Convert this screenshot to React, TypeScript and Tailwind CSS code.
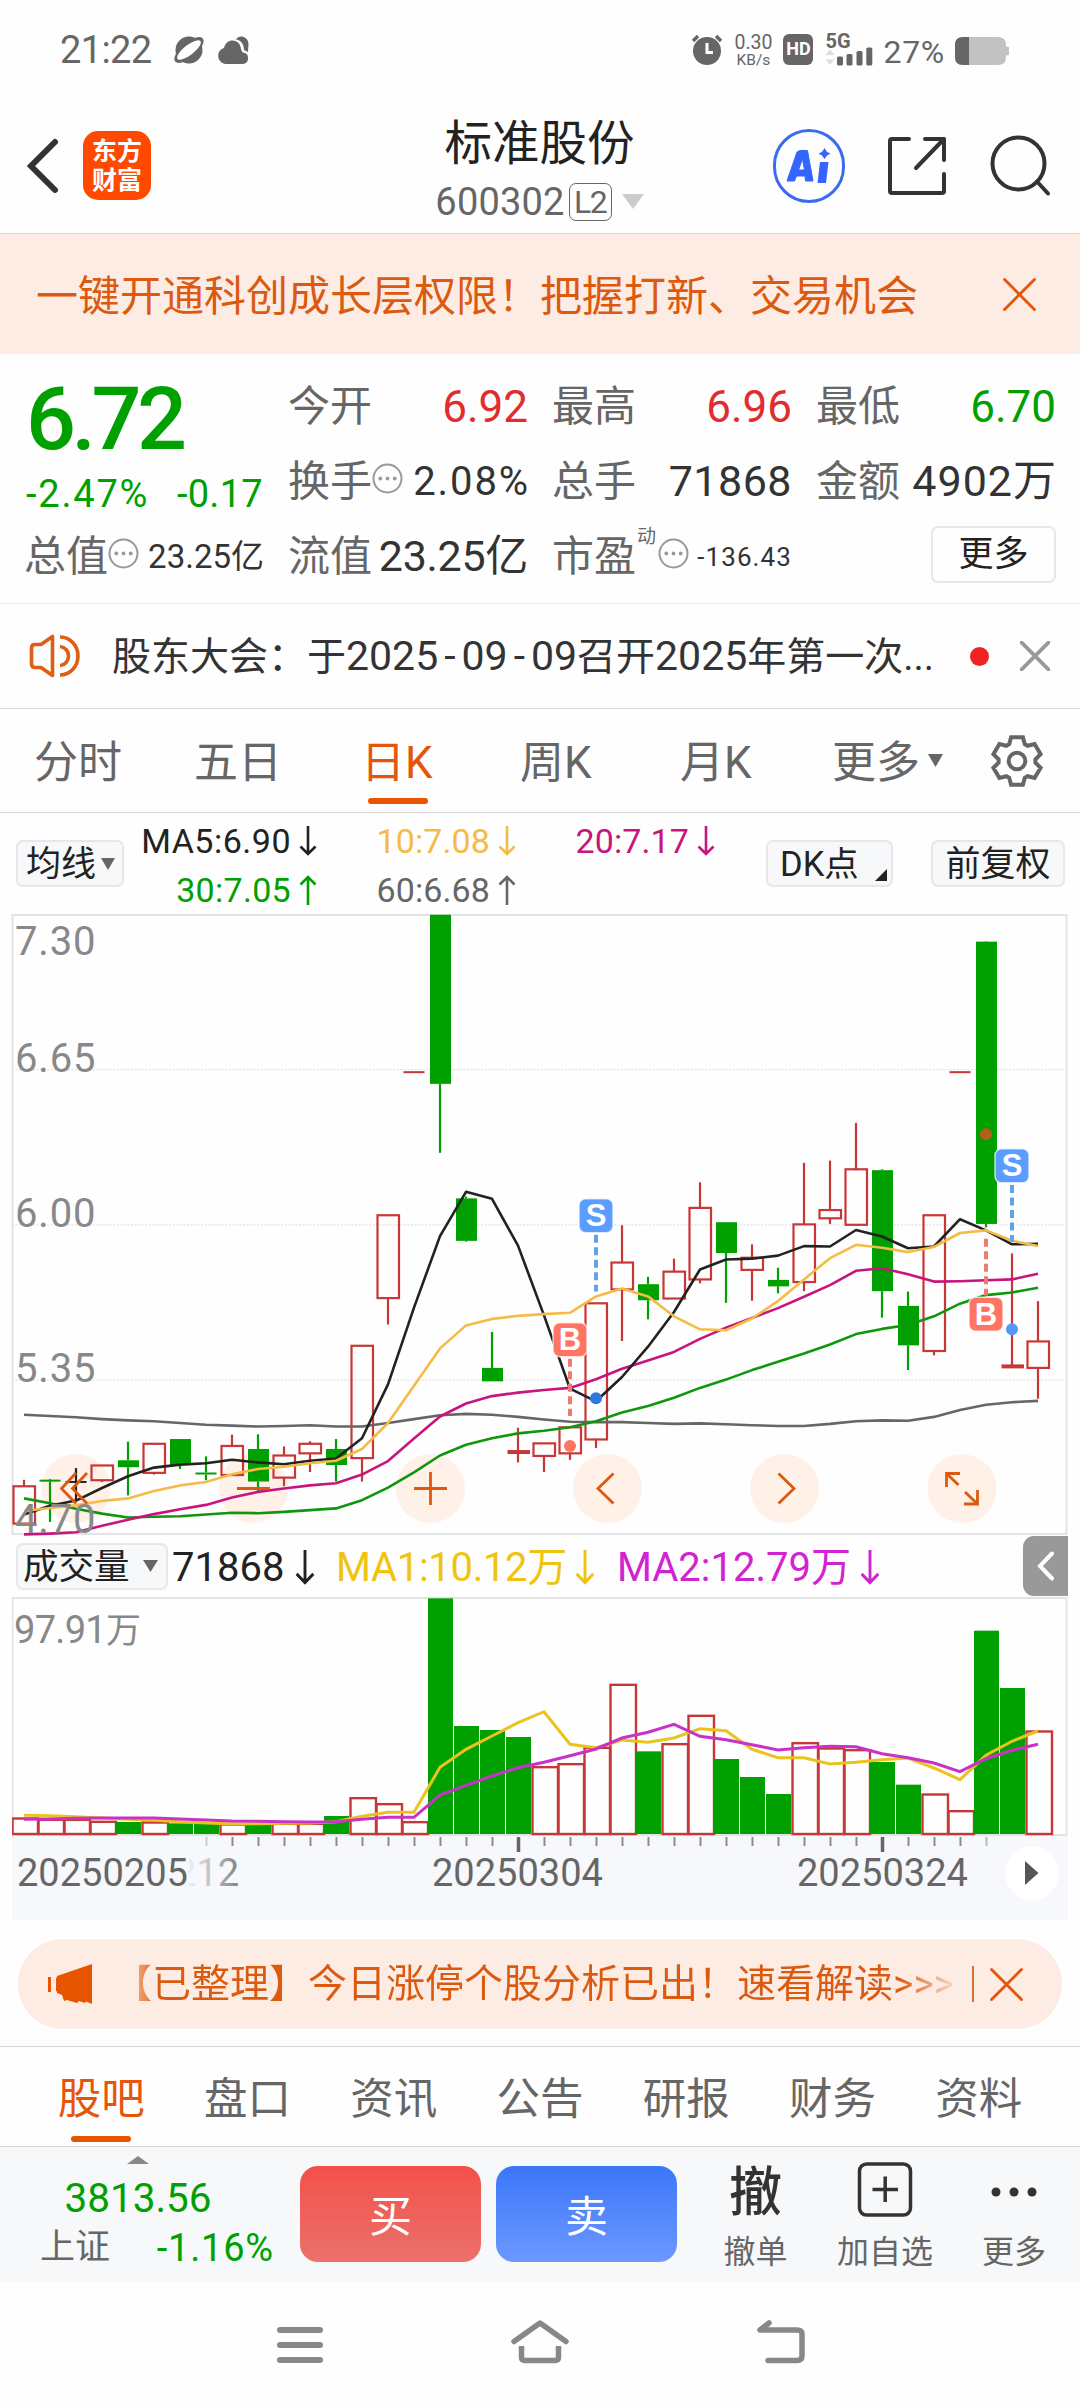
import React from "react";

const GREEN = "#00a000";
const RED = "#c83737";

/* ---------- chart data ---------- */

// One unit of the price scale in pixels.
const UNIT = 1 / 2.306;
const STEP = 26;
const cx = (i: number) => 12 + STEP * i;
const py = (v: number) => v * UNIT - 14;

type Candle = [kind: "u" | "d" | "n", high: number, top: number, bottom: number, low: number];

const candles: Candle[] = [
  ["u", 1337, 1352, 1438, 1438],
  ["d", 1335, 1337, 1341, 1434],
  ["n", 1310, 1341, 1343, 1385],
  ["u", 1304, 1304, 1338, 1342],
  ["d", 1249, 1292, 1308, 1373],
  ["u", 1254, 1254, 1321, 1325],
  ["d", 1243, 1243, 1303, 1312],
  ["d", 1283, 1320, 1325, 1338],
  ["u", 1233, 1259, 1326, 1326],
  ["d", 1232, 1266, 1341, 1365],
  ["u", 1260, 1281, 1332, 1352],
  ["u", 1248, 1254, 1276, 1319],
  ["d", 1243, 1266, 1303, 1341],
  ["u", 1028, 1028, 1287, 1341],
  ["u", 727, 727, 918, 979],
  ["u", 397, 397, 397, 397],
  ["d", 34, 34, 424, 583],
  ["d", 684, 688, 786, 788],
  ["d", 996, 1079, 1110, 1110],
  ["u", 1217, 1271, 1275, 1297],
  ["u", 1253, 1253, 1282, 1319],
  ["u", 1216, 1216, 1276, 1291],
  ["u", 930, 930, 1244, 1264],
  ["u", 750, 836, 898, 1017],
  ["d", 869, 886, 923, 967],
  ["u", 827, 857, 919, 919],
  ["u", 651, 710, 875, 884],
  ["d", 743, 743, 814, 929],
  ["u", 794, 825, 853, 924],
  ["d", 848, 876, 891, 907],
  ["u", 606, 748, 881, 902],
  ["u", 601, 715, 734, 747],
  ["u", 514, 621, 749, 749],
  ["d", 621, 623, 902, 963],
  ["d", 903, 936, 1027, 1084],
  ["u", 727, 727, 1040, 1050],
  ["u", 397, 397, 397, 397],
  ["d", 95, 96, 747, 755],
  ["u", 815, 1073, 1078, 1078],
  ["u", 925, 1018, 1079, 1150],
];

const ma5 = [1417, 1397, 1385, 1356, 1329, 1309, 1302, 1299, 1291, 1297, 1301, 1293, 1288, 1241, 1117, 940, 775, 673, 689, 797, 958, 1127, 1156, 1100, 1030, 950, 852, 829, 827, 820, 798, 799, 761, 776, 803, 799, 736, 762, 794, 793];
const ma10 = [1409, 1402, 1396, 1386, 1380, 1363, 1350, 1342, 1324, 1312, 1307, 1299, 1293, 1266, 1206, 1120, 1034, 981, 966, 959, 955, 952, 914, 896, 914, 960, 990, 992, 965, 925, 875, 826, 795, 802, 812, 800, 768, 762, 786, 798];
const ma20 = [1463, 1461, 1458, 1443, 1429, 1416, 1405, 1395, 1378, 1365, 1357, 1350, 1345, 1325, 1294, 1242, 1191, 1161, 1144, 1136, 1130, 1125, 1105, 1081, 1062, 1042, 1012, 986, 964, 941, 915, 888, 855, 849, 863, 880, 879, 877, 875, 862];
const ma30 = [1380, 1391, 1404, 1415, 1424, 1422, 1421, 1417, 1413, 1414, 1411, 1407, 1403, 1384, 1355, 1320, 1281, 1256, 1241, 1230, 1224, 1216, 1202, 1182, 1167, 1148, 1125, 1106, 1084, 1065, 1046, 1025, 1001, 989, 980, 960, 931, 911, 905, 894];
const ma60 = [1187, 1190, 1193, 1197, 1200, 1202, 1206, 1210, 1212, 1214, 1213, 1211, 1214, 1214, 1206, 1197, 1188, 1185, 1187, 1192, 1198, 1203, 1204, 1204, 1206, 1208, 1207, 1209, 1211, 1213, 1213, 1208, 1202, 1200, 1201, 1192, 1176, 1164, 1158, 1155];

// Volume values count thirds of a pixel down from the header row.
const vy = (v: number) => v / 3 - 57;
const volumes: ["u" | "d", number][] = [
  ["u", 834], ["u", 838], ["u", 838], ["u", 844], ["d", 846], ["u", 846], ["d", 850], ["d", 852], ["u", 852], ["d", 852],
  ["u", 850], ["u", 850], ["d", 828], ["u", 773], ["u", 791], ["u", 845], ["d", 175], ["d", 558], ["d", 570], ["d", 591],
  ["u", 680], ["u", 671], ["u", 622], ["u", 433], ["d", 634], ["u", 611], ["u", 526], ["d", 657], ["d", 711], ["d", 762],
  ["u", 608], ["u", 624], ["u", 629], ["d", 666], ["d", 734], ["u", 762], ["u", 812], ["d", 272], ["d", 444], ["u", 573],
];
const volMa1 = [826, 827, 830, 834, 838, 841, 845, 849, 851, 851, 850, 849, 845, 829, 817, 817, 682, 628, 588, 548, 515, 613, 623, 600, 607, 594, 566, 572, 628, 653, 653, 672, 667, 659, 654, 684, 719, 646, 604, 573];
const volMa2 = [838, 837, 835, 834, 834, 834, 837, 840, 843, 844, 845, 846, 845, 838, 832, 832, 765, 736, 708, 683, 667, 647, 627, 594, 577, 553, 589, 599, 614, 630, 623, 619, 620, 641, 653, 669, 695, 656, 631, 613];

const points = (vals: number[], y: (v: number) => number) => vals.map((v, i) => `${cx(i)},${y(v).toFixed(1)}`).join(" ");

/* ---------- icons ---------- */

function Cross({ size, color, width = 3 }: { size: number; color: string; width?: number }) {
  return (
    <svg width={size} height={size} viewBox="0 0 32 32" fill="none" stroke={color} strokeWidth={width} strokeLinecap="round">
      <path d="M1.5 1.5 30.5 30.5M30.5 1.5 1.5 30.5" />
    </svg>
  );
}

function Dots() {
  return (
    <svg width="31" height="31" viewBox="0 0 31 31" className="mb-1.5 shrink-0">
      <circle cx="15.5" cy="15.5" r="14" fill="none" stroke="#999" strokeWidth="2" />
      <circle cx="8.3" cy="15.5" r="1.9" fill="#999" />
      <circle cx="15.5" cy="15.5" r="1.9" fill="#999" />
      <circle cx="22.7" cy="15.5" r="1.9" fill="#999" />
    </svg>
  );
}

function Arrow({ up = false, h = 30, w = 18, color }: { up?: boolean; h?: number; w?: number; color: string }) {
  return (
    <svg width={w} height={h} viewBox="0 0 18 30" preserveAspectRatio="none" fill="none" stroke={color} strokeWidth="2.6" className={up ? "rotate-180" : ""}>
      <path d="M9 0V28M1.5 20.5 9 28 16.5 20.5" />
    </svg>
  );
}

function Caret({ w, h, color }: { w: number; h: number; color: string }) {
  return (
    <svg width={w} height={h} viewBox="0 0 10 10" preserveAspectRatio="none" className="shrink-0">
      <path d="M0 0H10L5 10Z" fill={color} />
    </svg>
  );
}

function Gear() {
  const pts: string[] = [];
  for (let k = 0; k < 6; k++) {
    for (const [r, d] of [[18.5, -25], [24.5, -14], [24.5, 14], [18.5, 25]]) {
      const a = ((-90 + 60 * k + d) * Math.PI) / 180;
      pts.push(`${(27 + r * Math.cos(a)).toFixed(1)},${(27 + r * Math.sin(a)).toFixed(1)}`);
    }
  }
  return (
    <svg width="54" height="54" viewBox="0 0 54 54" fill="none" stroke="#666" strokeWidth="4">
      <polygon points={pts.join(" ")} />
      <circle cx="27" cy="27" r="8.3" />
    </svg>
  );
}

/* ---------- sections ---------- */

function StatusBar() {
  return (
    <div className="flex h-[98px] items-center pl-[60px] pr-[71px] text-[#666]">
      <span className="pt-px text-[38px] leading-none tracking-[-0.6px]">21:22</span>
      <svg width="32" height="30" viewBox="0 0 32 30" className="mt-[2px] ml-[21px]">
        <circle cx="16" cy="15" r="13.5" fill="#666" />
        <ellipse cx="16" cy="15" rx="18" ry="7.5" transform="rotate(-40 16 15)" fill="#666" />
        <ellipse cx="16" cy="15" rx="14.5" ry="5" transform="rotate(-38 16 15)" fill="#fff" />
      </svg>
      <svg width="32" height="30" viewBox="0 0 32 30" className="mt-[2px] ml-[13px]" fill="#666">
        <path d="M19 3.5C21 0 30 1 30.500 9L30 17 26 15C26 8 22 5 17 4Z" />
        <path d="M8 29C-2 28-2 15 6 13 8 3 22 3 23 14 24 17 25 18 27 18 31 19 32 28 25 29Z" />
      </svg>
      <div className="flex-1" />
      <svg width="32" height="32" viewBox="0 0 32 32" fill="none">
        <circle cx="16" cy="18" r="14" fill="#666" />
        <path d="M2 8 7 3M30 8 25 3" stroke="#666" strokeWidth="3.5" />
        <path d="M16 10V19.500H22" stroke="#fff" strokeWidth="3" />
      </svg>
      <div className="ml-[10px] flex w-[40px] flex-col items-center pt-[3px] leading-none">
        <span className="text-[19.500px] leading-[18px]">0.30</span>
        <span className="text-[15.500px] leading-[16px]">KB/s</span>
      </div>
      <div className="ml-[10px] flex h-[31px] w-[30px] items-center justify-center rounded-[6px] bg-[#666] text-[18px] leading-none font-bold text-white">HD</div>
      <div className="ml-[12px] flex h-[32px] w-[48px] flex-col">
        <span className="text-[20px] leading-[16px] font-bold">5G</span>
        <svg width="48" height="17" viewBox="0 0 48 17" fill="#666" className="overflow-visible">
          <path d="M0.500 6 5 0.500 9.500 6ZM0.500 10.500 5 16 9.500 10.500Z" fill="#ddd" />
          <rect x="12" y="7.500" width="6" height="9" rx="1.500" />
          <rect x="21.500" y="5" width="6" height="11.500" rx="1.500" />
          <rect x="31.500" y="2" width="6" height="14.500" rx="1.500" />
          <rect x="41.300" y="-1.500" width="6" height="18" rx="1.500" />
        </svg>
      </div>
      <span className="mt-[6px] ml-[10px] text-[32px] leading-none tracking-[0.700px]">27%</span>
      <svg width="54" height="28" viewBox="0 0 54 28" className="mt-1 ml-[10px]">
        <path d="M8 0H43Q51 0 51 8V9.500L54 10V18L51 18.500V20Q51 28 43 28H8Q0 28 0 20V8Q0 0 8 0Z" fill="#c2c2c2" />
        <path d="M8 0H14V28H8Q0 28 0 20V8Q0 0 8 0Z" fill="#666" />
      </svg>
    </div>
  );
}

function Header() {
  return (
    <div className="flex h-[136px] items-center border-b border-[#d5d5d5] pl-[27px] pr-[29px]">
      <svg width="32" height="56" viewBox="0 0 32 56" fill="none" stroke="#333" strokeWidth="6" strokeLinecap="round" className="shrink-0">
        <path d="M28 4 4 28 28 52" />
      </svg>
      <div className="ml-6 flex h-[69px] w-[68px] shrink-0 flex-col items-center justify-center rounded-[15px] bg-[#ff4800] text-[25px] leading-[29px] font-bold text-white">
        <span>东方</span>
        <span>财富</span>
      </div>
      <div className="flex flex-1 flex-col items-center pt-[5px] pl-[155px]">
        <h1 className="text-[47.500px] leading-[56px] text-[#222]">标准股份</h1>
        <div className="mt-[11px] flex items-center text-[38px] leading-[38px] text-[#666]">
          <span className="tracking-[0.200px]">600302</span>
          <span className="ml-[4px] flex h-[38px] w-[43px] items-center justify-center rounded-[7px] border border-[#666] text-[32px] leading-none tracking-[-1.500px]">L2</span>
          <span className="ml-[10px]"><Caret w={22} h={15} color="#ccc" /></span>
        </div>
      </div>
      <div className="flex h-[74px] w-[72px] items-center justify-center rounded-full border-[3.500px] border-[#3d6bf0]">
        <svg width="46" height="36" viewBox="0 0 46 36" fill="#3565ff">
          <path fillRule="evenodd" d="M14 2.500H21.500L27 33H19.500L19 28H10.500L8.500 33H1L11 4ZM16.500 11 12.500 22H18.500Z" stroke="#3565ff" strokeLinejoin="round" />
          <path d="M34 14H42.500L40 35H31.500Z" />
          <path d="M38.500 0 41 4 44.500 5.500 41 7.500 38.500 11 36 7.500 32.500 5.500 36 4Z" />
        </svg>
      </div>
      <svg width="60" height="60" viewBox="0 0 60 60" fill="none" stroke="#333" strokeWidth="4" strokeLinecap="round" strokeLinejoin="round" className="ml-[42px]">
        <path d="M22 3H5Q3 3 3 5V55Q3 57 5 57H55Q57 57 57 55V38M38 3H57V24M56 4 29 32" />
      </svg>
      <svg width="62" height="62" viewBox="0 0 62 62" fill="none" stroke="#333" strokeWidth="4" strokeLinecap="round" className="ml-[42px]">
        <circle cx="29.500" cy="28.500" r="26" />
        <path d="M48 46.500 59 58.500" />
      </svg>
    </div>
  );
}

function Stat({ label, value, color = "text-[#333]", size = "text-[44px]", dots = false, sup }: { label: string; value: string; color?: string; size?: string; dots?: boolean; sup?: string }) {
  return (
    <div className="flex h-[75px] items-center whitespace-nowrap">
      <span className="text-[42px] leading-none text-[#666]">{label}</span>
      {sup && <span className="mb-[40px] ml-px text-[19px] leading-none text-[#666]">{sup}</span>}
      {dots && <span className={sup ? "ml-[2px]" : ""}><Dots /></span>}
      <span className={`ml-auto leading-none ${size} ${color}`}>{value}</span>
    </div>
  );
}

function Quote() {
  return (
    <div className="grid h-[250px] grid-cols-4 content-start gap-x-6 border-b border-[#ececec] px-6 pt-[15px]">
      <div className="row-span-2 flex flex-col pr-[1px] pl-[2px] text-[#00a000]">
        <span className="flex h-[100px] items-center text-[88px] leading-none font-medium tracking-[-4.500px]">6.72</span>
        <div className="flex h-[50px] items-center justify-between text-[38px] leading-none">
          <span className="tracking-[1.800px]">-2.47%</span>
          <span className="tracking-[0.300px]">-0.17</span>
        </div>
      </div>
      <Stat label="今开" value="6.92" color="text-[#e12d2d]" />
      <Stat label="最高" value="6.96" color="text-[#e12d2d]" />
      <Stat label="最低" value="6.70" color="text-[#00a000]" />
      <Stat label="换手" value="2.08%" dots size="text-[40px] tracking-[1.900px] -mr-[2px]" />
      <Stat label="总手" value="71868" size="text-[43px] tracking-[0.500px]" />
      <Stat label="金额" value="4902万" size="text-[43px] tracking-[1px] -mr-px" />
      <Stat label="总值" value="23.25亿" dots size="text-[33px]" />
      <Stat label="流值" value="23.25亿" size="text-[43px] tracking-[-0.300px]" />
      <Stat label="市盈" value="-136.43" dots sup="动" size="text-[26px] tracking-[1.100px]" />
      <div className="flex h-[71px] items-center justify-end">
        <button className="flex h-[57px] w-[125px] items-center justify-center rounded-[7px] border-2 border-[#e8e8e8] text-[35px] leading-none text-[#222]">更多</button>
      </div>
    </div>
  );
}

function Notice() {
  return (
    <div className="flex h-[105px] items-center border-b border-[#d8d8d8] pl-[29px] pr-[30px]">
      <svg width="52" height="44" viewBox="0 0 52 44" fill="none" stroke="#dc5f14" strokeWidth="3.6">
        <path d="M2.500 14Q2.500 10.500 6 10.500H12L23.500 2.500V41.500L12 33.500H6Q2.500 33.500 2.500 30Z" strokeLinejoin="round" />
        <path d="M31 12.500C36 13 39.500 17 39.500 22S36 31 31 31.500M31 3C41.500 3 49 12 49 22S41.500 41 31 41" />
      </svg>
      <p className="ml-[31px] text-[39px] leading-none whitespace-nowrap text-[#333]">
        股东大会：于
        <span className="text-[41px]">
          2025<span className="px-[6px]">-</span>09<span className="px-[6px]">-</span>09
        </span>
        召开<span className="text-[41px]">2025</span>年第一次...
      </p>
      <div className="flex-1" />
      <span className="mr-[31px] h-[19px] w-[19px] rounded-full bg-[#f02323]" />
      <Cross size={30} color="#999" width={4} />
    </div>
  );
}

function PeriodTabs() {
  const items = [
    ["分时", "w-[160px] pl-[34px]"],
    ["五日", "w-[160px] pl-[34px]"],
    ["日K", "w-[160px] pl-[41px]"],
    ["周K", "w-[160px] pl-[40px]"],
    ["月K", "w-[160px] pl-[40px]"],
  ];
  return (
    <div className="flex h-[104px] items-center border-b border-[#d5d5d5] text-[44px] leading-none text-[#666]">
      {items.map(([t, c]) => (
        <div key={t} className={`relative flex h-full items-center pt-[5px] ${c} ${t === "日K" ? "text-[#e6560a]" : ""}`}>
          {t}
          {t === "日K" && <span className="absolute bottom-[8px] left-[48px] h-[6px] w-[60px] rounded-full bg-[#e85500]" />}
        </div>
      ))}
      <div className="flex items-center pl-[32px]">
        <span className="pt-[5px]">更多</span>
        <span className="ml-[8px]"><Caret w={15} h={13} color="#666" /></span>
      </div>
      <span className="ml-[47px]"><Gear /></span>
    </div>
  );
}

const pill = "flex items-center rounded-[7px] border-2 border-[#e5e7ea] bg-[#f7f8fa] leading-none text-[#222]";

function Ma({ text, color, width, up = false }: { text: string; color: string; width: string; up?: boolean }) {
  return (
    <div className={`flex items-center justify-end gap-[8px] ${width}`} style={{ color }}>
      <span>{text}</span>
      <Arrow up={up} color={color} />
    </div>
  );
}

function Indicators() {
  return (
    <div className="flex h-[101px] pl-[16px] pr-[15px]">
      <div className={`${pill} mt-[27px] h-[47px] w-[108px] justify-between pr-[7px] pl-[8px] text-[35px]`}>
        <span className="pt-px">均线</span>
        <Caret w={14} h={12} color="#666" />
      </div>
      <div className="ml-[12px] flex flex-col pt-[3px] text-[34px] leading-none tracking-[0.100px] whitespace-nowrap">
        <div className="flex h-[49px] items-center">
          <Ma text="MA5:6.90" color="#222" width="w-[181px] tracking-[0.500px]" />
          <Ma text="10:7.08" color="#f5bb46" width="w-[199px]" />
          <Ma text="20:7.17" color="#c8147d" width="w-[199px]" />
        </div>
        <div className="flex h-[49px] items-center">
          <Ma text="30:7.05" color={GREEN} width="w-[181px] tracking-[0.300px]" up />
          <Ma text="60:6.68" color="#666" width="w-[199px]" up />
        </div>
      </div>
      <div className={`${pill} relative mt-[27px] ml-auto h-[47px] w-[127px] pl-[12px] text-[34.500px]`}>
        <span className="pt-px">DK点</span>
        <svg width="12" height="12" viewBox="0 0 12 12" className="absolute right-[4px] bottom-[4px]"><path d="M12 0V12H0Z" fill="#222" /></svg>
      </div>
      <div className={`${pill} mt-[27px] ml-[38px] h-[47px] w-[134px] justify-center pt-px text-[35px]`}>前复权</div>
    </div>
  );
}

function Marker({ x, y, letter }: { x: number; y: number; letter: "B" | "S" }) {
  return (
    <g>
      <rect x={x - 17} y={y - 17} width="34" height="34" rx="6.5" fill={letter === "S" ? "#5a9dff" : "#ff7463"} stroke="#fff" strokeOpacity="0.7" strokeWidth="1.5" />
      <text x={x} y={y + 10.5} textAnchor="middle" fontSize="31" fontWeight="700" fill="#fff" fontFamily="Liberation Sans, sans-serif">{letter}</text>
    </g>
  );
}

function PriceChart() {
  const labels: [string, number][] = [["7.30", 41], ["6.65", 158], ["6.00", 313], ["5.35", 468], ["4.70", 619]];
  return (
    <svg width="1056" height="621" viewBox="0 0 1056 621" className="ml-[12px] block overflow-visible" fill="none" fontFamily="Roboto, sans-serif">
      <rect x="0.5" y="1" width="1054" height="619" stroke="#e3e3e3" strokeWidth="2" />
      {[391, 749, 1107].map((v) => (
        <path key={v} d={`M0 ${py(v)}H1055`} stroke="#e2e2e2" strokeWidth="1.2" strokeDasharray="2 1.5" />
      ))}
      {[64, 241.5, 418.5, 595.5, 772.5, 950].map((x) => (
        <circle key={x} cx={x} cy="574.5" r="34.5" fill="#fff0e8" />
      ))}
      {candles.map(([kind, high, top, bottom, low], i) => {
        const x = cx(i);
        const color = kind === "d" ? GREEN : kind === "n" ? "#222" : RED;
        const flat = bottom - top < 6;
        return (
          <g key={i} stroke={color} strokeWidth="2.2">
            {high < top && <path d={`M${x} ${py(high)}V${py(top)}`} />}
            {low > bottom && <path d={`M${x} ${py(bottom)}V${py(low)}`} />}
            {flat ? (
              <path d={`M${x - 10.5} ${py((top + bottom) / 2)}h${bottom - top > 3 && kind === "u" ? 22.5 : 21}`} strokeWidth={bottom - top > 3 && kind === "u" ? 4 : 2} />
            ) : kind === "d" ? (
              <rect x={x - 10} y={py(top)} width="21" height={(bottom - top) * UNIT} fill={color} stroke="none" />
            ) : (
              <rect x={x - 10.5} y={py(top)} width="21.5" height={(bottom - top) * UNIT} />
            )}
          </g>
        );
      })}
      <g strokeWidth="2.6" strokeLinejoin="round">
        <polyline points={points(ma60, py)} stroke="#666" />
        <polyline points={points(ma30, py)} stroke="#0f960f" />
        <polyline points={points(ma20, py)} stroke="#c8147d" />
        <polyline points={points(ma5, py)} stroke="#222" />
        <polyline points={points(ma10, py)} stroke="#f5bb46" />
      </g>
      {labels.map(([t, y]) => (
        <text key={t} x="3" y={y} fontSize="40" letterSpacing="0.8" fill="#888">{t}</text>
      ))}
      <g strokeWidth="4" strokeDasharray="8 4.5">
        <path d={`M584 ${py(772)}V${py(903)}M1000 ${py(657)}V${py(788)}`} stroke="#62a2e6" />
        <path d={`M558 ${py(1058)}V${py(1190)}M974 ${py(781)}V${py(912)}`} stroke="#ee7b6c" />
      </g>
      <circle cx="584" cy={py(1149)} r="6" fill="#3278dc" />
      <circle cx="1000" cy={py(990)} r="6" fill="#5a96f5" />
      <circle cx="558" cy={py(1259)} r="6" fill="#ff7463" />
      <circle cx="974" cy={py(540)} r="6" fill="#b45f1e" />
      <Marker x={584} y={py(728)} letter="S" />
      <Marker x={558} y={py(1014)} letter="B" />
      <Marker x={1000} y={py(613)} letter="S" />
      <Marker x={974} y={py(955)} letter="B" />
      <g stroke="#dc5a10" strokeWidth="2.8">
        <path d="M64 559 49.500 574.500 64 589.500M75 559 60.500 574.500 75 589.500" />
        <path d="M225 574.500H258" />
        <path d="M402 574.500H435M418.500 558V591" />
        <path d="M601.500 559.500 586 574.500 601.500 589.500" />
        <path d="M766.500 559.500 782 574.500 766.500 589.500" />
        <path d="M948 559.500H934.500V573M935 560 946.500 571M952 590H965.500V576M965 589.500 953 578" />
      </g>
    </svg>
  );
}

function VolumeHeader() {
  return (
    <div className="flex h-[62px] items-center pl-[16px] text-[40px] leading-none whitespace-nowrap">
      <div className={`${pill} h-[47px] w-[152px] justify-between pr-[8px] pl-[5px] text-[35.500px]`}>
        <span className="pt-[3px]">成交量</span>
        <Caret w={15} h={12} color="#666" />
      </div>
      <div className="ml-[4px] flex w-[164px] items-center pt-[3px] text-[#222]">
        <span className="w-[123px]">71868</span>
        <Arrow h={35} w={20} color="#222" />
      </div>
      <div className="flex w-[281px] items-center pt-[3px] text-[#f0c310]">
        <span className="w-[239px] tracking-[-0.300px]">MA1:10.12万</span>
        <Arrow h={35} w={20} color="#f0c310" />
      </div>
      <div className="flex items-center pt-[3px] text-[#d223d2]">
        <span className="w-[243px]">MA2:12.79万</span>
        <Arrow h={35} w={20} color="#d223d2" />
      </div>
      <div className="mr-[12px] ml-auto flex h-[60px] w-[45px] items-center justify-center rounded-l-[11px] bg-[#999]">
        <svg width="18" height="30" viewBox="0 0 18 30" fill="none" stroke="#fff" strokeWidth="4" strokeLinecap="round"><path d="M15 2.500 3 15 15 27.500" /></svg>
      </div>
    </div>
  );
}

function VolumeChart() {
  return (
    <svg width="1056" height="239" viewBox="0 0 1056 239" className="ml-[12px] block" fill="none">
      <rect x="0.5" y="1" width="1054" height="237" stroke="#e3e3e3" strokeWidth="2" />
      <text x="2" y="46" fontSize="38" fill="#888" fontFamily="Roboto, 'Noto Sans CJK SC', sans-serif" letterSpacing="-0.7">
        97.91<tspan fontSize="35">万</tspan>
      </text>
      {volumes.map(([kind, v], i) =>
        kind === "d" ? (
          <rect key={i} x={cx(i) - 12} y={vy(v)} width="25" height={237 - vy(v)} fill={GREEN} />
        ) : (
          <rect key={i} x={cx(i) - 11.5} y={vy(v) + 0.5} width="25.5" height={236.5 - vy(v)} stroke={RED} strokeWidth="2.4" />
        ),
      )}
      <polyline points={points(volMa1, vy)} stroke="#ebc31e" strokeWidth="3" />
      <polyline points={points(volMa2, vy)} stroke="#c832c8" strokeWidth="3" />
    </svg>
  );
}

function TimeAxis() {
  const ticks = Array.from({ length: 31 }, (_, k) => k + 7);
  return (
    <svg width="1056" height="84" viewBox="0 0 1056 84" className="ml-[12px] block bg-[#f7f8fb]" fontFamily="Roboto, sans-serif" fontSize="38" fill="#666">
      {ticks.map((i) => {
        const major = i === 19 || i === 33;
        return <path key={i} d={`M${cx(i) + 0.5} 1V${major ? 16 : 10}`} stroke={major ? "#666" : "#8c8c8c"} strokeWidth={major ? 3.5 : 2} opacity={i === 7 ? 0.4 : i === 37 ? 0.6 : 1} />;
      })}
      <defs>
        <linearGradient id="fade" gradientUnits="userSpaceOnUse" x1="180" x2="230" y1="0" y2="0">
          <stop offset="0" stopColor="#666" stopOpacity="0.1" />
          <stop offset="1" stopColor="#666" stopOpacity="0.85" />
        </linearGradient>
      </defs>
      <text x="163" y="50" fill="url(#fade)">212</text>
      <rect x="0" y="18" width="177" height="40" fill="#f7f8fb" />
      <text x="5" y="50">20250205</text>
      <text x="420" y="50">20250304</text>
      <text x="785" y="50">20250324</text>
      <circle cx="1020" cy="37" r="27" fill="#fff" />
      <path d="M1013 25V49L1026.500 37Z" fill="#555" />
    </svg>
  );
}

function Promo() {
  return (
    <div className="mx-[18px] mt-[19px] mb-[17px] flex h-[90px] items-center rounded-full bg-[#fcece3] pr-[39px] pl-[29px]">
      <svg width="48" height="40" viewBox="0 0 48 40" fill="#e85500">
        <path d="M1 13H4V28H1ZM10 12 45 0V40L39 37.500 38 39 32 37 30 39 20 36 17 37 15 31 10 29Z" />
        <path d="M9 14 14 11V30L9 27Z" />
      </svg>
      <p className="ml-[18px] w-[846px] overflow-hidden bg-[linear-gradient(90deg,#f3b48f_20px,#dc5a10_46px,#dc5a10_785px,#fcece3_850px)] bg-clip-text text-[39px] leading-[48px] whitespace-nowrap text-transparent">【已整理】今日涨停个股分析已出！速看解读&gt;&gt;&gt;</p>
      <span className="mr-[16px] ml-auto h-[36px] w-[2px] bg-[#d9713c]" />
      <Cross size={33} color="#e6560a" width={2.8} />
    </div>
  );
}

function SectionTabs() {
  return (
    <div className="flex h-[101px] items-center border-y border-[#d5d5d5] px-[28px] text-[43.500px] leading-none text-[#666]">
      {["股吧", "盘口", "资讯", "公告", "研报", "财务", "资料"].map((t, i) => (
        <div key={t} className={`relative flex h-full flex-1 items-center justify-center pt-[7px] ${i === 0 ? "text-[#e6560a]" : ""}`}>
          {t}
          {i === 0 && <span className="absolute bottom-[4px] left-[43px] h-[6px] w-[60px] rounded-full bg-[#e85500]" />}
        </div>
      ))}
    </div>
  );
}

function ActionBar() {
  return (
    <div className="flex h-[135px] bg-[#f7f8fa]">
      <div className="flex w-[276px] flex-col items-center leading-none">
        <svg width="22" height="8" viewBox="0 0 22 8" className="mt-[9px]"><path d="M11 0 22 8H0Z" fill="#888" /></svg>
        <span className="mt-[14px] text-[40.500px] leading-[40px] text-[#00a000]">3813.56</span>
        <div className="mt-[9px] flex w-full justify-between pr-[2px] pl-[40px] text-[35px] leading-[42px] text-[#666]">
          <span>上证</span>
          <span className="text-[38px] tracking-[0.800px] text-[#00a000]">-1.16%</span>
        </div>
      </div>
      <button className="mt-[19px] ml-[24px] flex h-[96px] w-[181px] items-center justify-center rounded-[18px] bg-gradient-to-b from-[#f2504a] to-[#ec706b] pt-1.5 text-[43px] leading-none text-white">买</button>
      <button className="mt-[19px] ml-[15px] flex h-[96px] w-[181px] items-center justify-center rounded-[18px] bg-gradient-to-b from-[#3b76f8] to-[#6c98ff] pt-1.5 text-[43px] leading-none text-white">卖</button>
      <div className="ml-[36px] flex w-[85px] flex-col items-center text-[32px] leading-none text-[#666]">
        <span className="mt-[17px] flex h-[58px] items-center text-[53px] leading-none font-medium text-[#333]">撤</span>
        <span className="mt-[14px]">撤单</span>
      </div>
      <div className="ml-[27px] flex w-[120px] flex-col items-center text-[32px] leading-none text-[#666]">
        <svg width="56" height="58" viewBox="0 0 56 58" fill="none" stroke="#333" strokeWidth="3.5" className="mt-[14px]">
          <rect x="2.5" y="3" width="51" height="51" rx="7" />
          <path d="M15.500 28.500H41M28.200 15.500V41" />
        </svg>
        <span className="mt-[17px]">加自选</span>
      </div>
      <div className="ml-[29px] flex w-[80px] flex-col items-center text-[32px] leading-none text-[#666]">
        <svg width="48" height="58" viewBox="0 0 48 58" fill="#333" className="mt-[14px]">
          <circle cx="6" cy="31" r="4.5" />
          <circle cx="24" cy="31" r="4.5" />
          <circle cx="42" cy="31" r="4.5" />
        </svg>
        <span className="mt-[17px]">更多</span>
      </div>
    </div>
  );
}

function NavBar() {
  return (
    <div className="flex h-[126px] items-start pt-[36px] pl-[276px]">
      <svg width="48" height="46" viewBox="0 0 48 46" stroke="#888" strokeWidth="6" strokeLinecap="round" className="mt-[3px]">
        <path d="M4 9H44M4 24H44M4 39H44" />
      </svg>
      <svg width="60" height="48" viewBox="0 0 60 48" fill="none" stroke="#888" strokeWidth="5.5" strokeLinecap="round" strokeLinejoin="round" className="ml-[186px]">
        <path d="M4 23.500 30 5 56 23.500" />
        <path d="M11.500 28V39Q11.500 42.500 15 42.500H45Q48.500 42.500 48.500 39V28" strokeLinecap="butt" />
      </svg>
      <svg width="52" height="48" viewBox="0 0 52 48" fill="none" stroke="#888" strokeWidth="5.5" strokeLinecap="round" strokeLinejoin="round" className="ml-[185px]">
        <path d="M14 5 5 12H42Q47 12 47 16V38Q47 42.500 42 42.500H13" />
      </svg>
    </div>
  );
}

export default function App() {
  return (
    <main className="h-[2408px] w-[1080px] overflow-hidden bg-[#fefefe] font-['Roboto','Noto_Sans_CJK_SC',sans-serif]">
      <StatusBar />
      <Header />
      <div className="flex h-[120px] items-center justify-between bg-[#fcece3] pr-[44px] pl-[36px] text-[42px] leading-none whitespace-nowrap text-[#dc5a10]">
        <span className="pt-[5px]">一键开通科创成长层权限！把握打新、交易机会</span>
        <Cross size={33} color="#e6560a" width={2.8} />
      </div>
      <Quote />
      <Notice />
      <PeriodTabs />
      <Indicators />
      <PriceChart />
      <VolumeHeader />
      <VolumeChart />
      <TimeAxis />
      <Promo />
      <SectionTabs />
      <ActionBar />
      <NavBar />
    </main>
  );
}
